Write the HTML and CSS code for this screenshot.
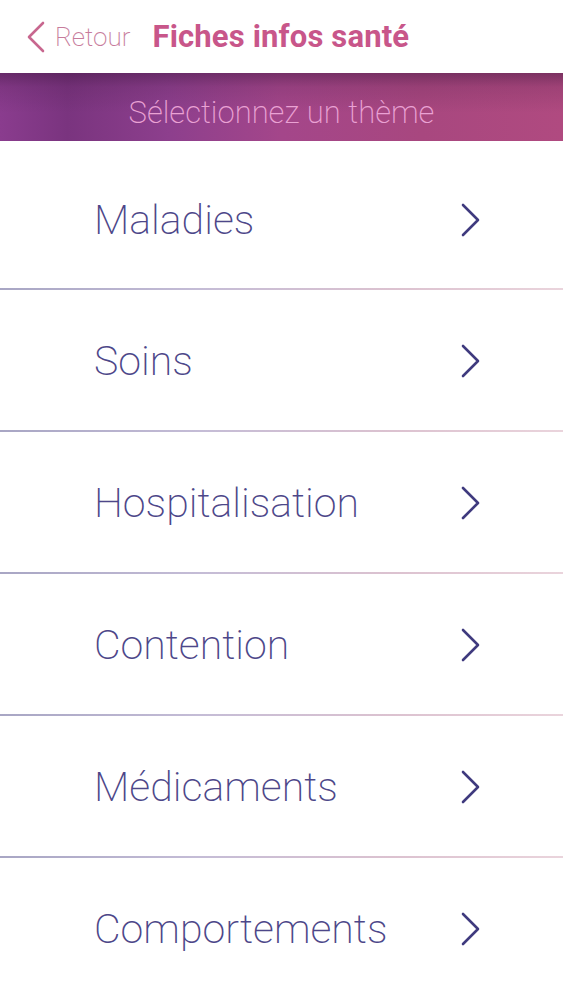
FILE: index.html
```html
<!DOCTYPE html>
<html lang="fr">
<head>
<meta charset="utf-8">
<title>Fiches infos santé</title>
<link rel="stylesheet" href="styles.css">
</head>
<body>
<header class="topbar">
  <a class="back" href="#">
    <svg class="back-icon" width="20" height="32" viewBox="0 0 20 32"><path d="M17 2 L3 16 L17 30" fill="none" stroke="#c8678f" stroke-width="2.6" stroke-linecap="round" stroke-linejoin="round"/></svg>
    <span class="back-label">Retour</span>
  </a>
  <h1 class="title">Fiches infos santé</h1>
</header>
<div class="banner">Sélectionnez un thème</div>
<ul class="themes">
  <li class="theme first"><span class="theme-label">Maladies</span><svg class="chev" width="20" height="34" viewBox="0 0 20 34"><path d="M2 2 L17 17 L2 32" fill="none" stroke="#3f3a7e" stroke-width="2.6" stroke-linecap="round" stroke-linejoin="round"/></svg></li>
  <li class="theme"><span class="theme-label">Soins</span><svg class="chev" width="20" height="34" viewBox="0 0 20 34"><path d="M2 2 L17 17 L2 32" fill="none" stroke="#3f3a7e" stroke-width="2.6" stroke-linecap="round" stroke-linejoin="round"/></svg></li>
  <li class="theme"><span class="theme-label">Hospitalisation</span><svg class="chev" width="20" height="34" viewBox="0 0 20 34"><path d="M2 2 L17 17 L2 32" fill="none" stroke="#3f3a7e" stroke-width="2.6" stroke-linecap="round" stroke-linejoin="round"/></svg></li>
  <li class="theme"><span class="theme-label">Contention</span><svg class="chev" width="20" height="34" viewBox="0 0 20 34"><path d="M2 2 L17 17 L2 32" fill="none" stroke="#3f3a7e" stroke-width="2.6" stroke-linecap="round" stroke-linejoin="round"/></svg></li>
  <li class="theme"><span class="theme-label">Médicaments</span><svg class="chev" width="20" height="34" viewBox="0 0 20 34"><path d="M2 2 L17 17 L2 32" fill="none" stroke="#3f3a7e" stroke-width="2.6" stroke-linecap="round" stroke-linejoin="round"/></svg></li>
  <li class="theme"><span class="theme-label">Comportements</span><svg class="chev" width="20" height="34" viewBox="0 0 20 34"><path d="M2 2 L17 17 L2 32" fill="none" stroke="#3f3a7e" stroke-width="2.6" stroke-linecap="round" stroke-linejoin="round"/></svg></li>
</ul>
</body>
</html>
```
FILE: styles.css
```css
html, body {
  margin: 0;
  padding: 0;
  background: #ffffff;
  font-family: Roboto, "Liberation Sans", sans-serif;
}
.topbar {
  height: 73px;
  display: flex;
  align-items: center;
  padding-left: 26px;
  box-sizing: border-box;
}
.back {
  display: flex;
  align-items: center;
  text-decoration: none;
  gap: 9px;
}
.back-icon { display: block; }
.back-label {
  font-size: 26px;
  font-weight: 200;
  color: #c77c9c;
}
.title {
  margin: 0 0 0 22px;
  font-size: 31px;
  font-weight: 700;
  color: #c8568a;
  letter-spacing: 0.15px;
}
.banner {
  height: 68px;
  box-sizing: border-box;
  padding-top: 10px;
  display: flex;
  align-items: center;
  justify-content: center;
  font-size: 31px;
  font-weight: 200;
  color: #eaa2d4;
  background:
    linear-gradient(180deg, rgba(60,20,60,0.45) 0px, rgba(60,20,60,0.15) 14px, rgba(0,0,0,0) 40px),
    linear-gradient(90deg, #8a3c8e 0%, #7a347f 12%, #8d3f8d 30%, #a4468a 50%, #a8477f 75%, #b04a80 100%);
}
.themes {
  list-style: none;
  margin: 0;
  padding: 0;
}
.theme {
  height: 142px;
  box-sizing: border-box;
  display: flex;
  align-items: center;
  justify-content: space-between;
  padding: 0 82px 0 94px;
  position: relative;
}
.theme.first { height: 149px; padding-top: 8px; }
.theme::after {
  content: "";
  position: absolute;
  left: 0;
  right: 0;
  bottom: 0;
  height: 2px;
  background: linear-gradient(90deg, #a8a6c4 0%, #c4bcd6 35%, #dcc2d0 70%, #ead4dc 100%);
}
.theme:last-child::after { display: none; }
.theme-label {
  font-size: 41px;
  font-weight: 200;
  color: #4d4789;
}
.chev { display: block; }
```
